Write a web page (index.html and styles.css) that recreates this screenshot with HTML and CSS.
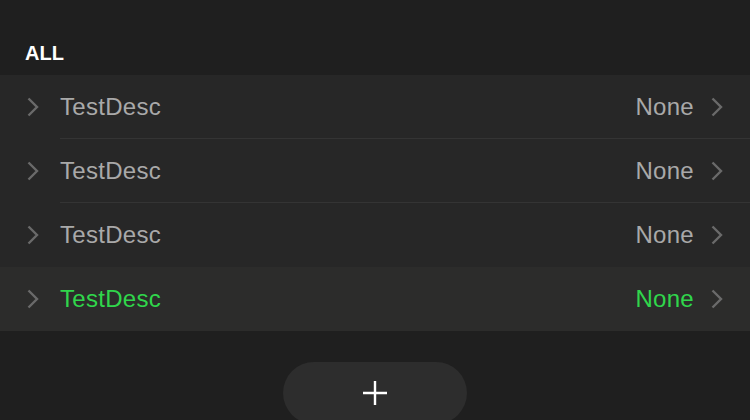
FILE: index.html
```html
<!DOCTYPE html>
<html>
<head>
<meta charset="utf-8">
<link rel="stylesheet" href="styles.css">
</head>
<body>
<div class="screen">
  <div class="section-title">ALL</div>
  <div class="list">
    <div class="row">
      <span class="lead"><svg width="14" height="22" viewBox="0 0 14 22"><path d="M2.5 2.5 L11 11 L2.5 19.5" fill="none" stroke="#6a6a6a" stroke-width="2.4"/></svg></span>
      <div class="body"><span class="name">TestDesc</span><span class="value">None</span>
        <span class="trail"><svg width="14" height="22" viewBox="0 0 14 22"><path d="M2.5 2.5 L11 11 L2.5 19.5" fill="none" stroke="#6a6a6a" stroke-width="2.4"/></svg></span></div>
    </div>
    <div class="row">
      <span class="lead"><svg width="14" height="22" viewBox="0 0 14 22"><path d="M2.5 2.5 L11 11 L2.5 19.5" fill="none" stroke="#6a6a6a" stroke-width="2.4"/></svg></span>
      <div class="body"><span class="name">TestDesc</span><span class="value">None</span>
        <span class="trail"><svg width="14" height="22" viewBox="0 0 14 22"><path d="M2.5 2.5 L11 11 L2.5 19.5" fill="none" stroke="#6a6a6a" stroke-width="2.4"/></svg></span></div>
    </div>
    <div class="row">
      <span class="lead"><svg width="14" height="22" viewBox="0 0 14 22"><path d="M2.5 2.5 L11 11 L2.5 19.5" fill="none" stroke="#6a6a6a" stroke-width="2.4"/></svg></span>
      <div class="body"><span class="name">TestDesc</span><span class="value">None</span>
        <span class="trail"><svg width="14" height="22" viewBox="0 0 14 22"><path d="M2.5 2.5 L11 11 L2.5 19.5" fill="none" stroke="#6a6a6a" stroke-width="2.4"/></svg></span></div>
    </div>
    <div class="row selected">
      <span class="lead"><svg width="14" height="22" viewBox="0 0 14 22"><path d="M2.5 2.5 L11 11 L2.5 19.5" fill="none" stroke="#6a6a6a" stroke-width="2.4"/></svg></span>
      <div class="body"><span class="name">TestDesc</span><span class="value">None</span>
        <span class="trail"><svg width="14" height="22" viewBox="0 0 14 22"><path d="M2.5 2.5 L11 11 L2.5 19.5" fill="none" stroke="#6a6a6a" stroke-width="2.4"/></svg></span></div>
    </div>
  </div>
  <div class="footer">
    <button class="add"><svg width="26" height="26" viewBox="0 0 26 26"><path d="M13 1 V25 M1 13 H25" stroke="#ffffff" stroke-width="2.4"/></svg></button>
  </div>
</div>
</body>
</html>
```

FILE: styles.css
```css
html, body {
  margin: 0;
  padding: 0;
  background: #1f1f1f;
  height: 100%;
  overflow: hidden;
}
.screen {
  width: 750px;
  height: 420px;
  font-family: "Liberation Sans", Arial, sans-serif;
  background: #1f1f1f;
}
.section-title {
  color: #ffffff;
  font-weight: bold;
  font-size: 20px;
  padding: 42px 0 0 25px;
  height: 75px;
  box-sizing: border-box;
  line-height: 22px;
}
.list {
  display: flex;
  flex-direction: column;
}
.row {
  display: flex;
  align-items: stretch;
  height: 64px;
  background: #272727;
}
.row.selected {
  background: #2c2c2b;
}
.lead {
  width: 60px;
  display: flex;
  align-items: center;
  justify-content: flex-start;
  padding-left: 26px;
  box-sizing: border-box;
}
.lead svg, .trail svg { display: block; }
.body {
  flex: 1;
  display: flex;
  align-items: center;
  border-bottom: 1px solid #343434;
}
.row:nth-child(3) .body,
.row:last-child .body { border-bottom: none; }
.name {
  flex: 1;
  color: #a9a9a9;
  font-size: 24px;
  letter-spacing: 0.3px;
}
.value {
  color: #a9a9a9;
  font-size: 24px;
  letter-spacing: 0.3px;
}
.selected .name, .selected .value {
  color: #30d64b;
}
.trail {
  width: 56px;
  display: flex;
  justify-content: flex-start;
  padding-left: 16px;
  box-sizing: border-box;
}
.footer {
  display: flex;
  justify-content: center;
  padding-top: 31px;
}
.add {
  width: 184px;
  height: 62px;
  border: none;
  border-radius: 31px;
  background: #2d2d2d;
  display: flex;
  align-items: center;
  justify-content: center;
  padding: 0;
}
```
